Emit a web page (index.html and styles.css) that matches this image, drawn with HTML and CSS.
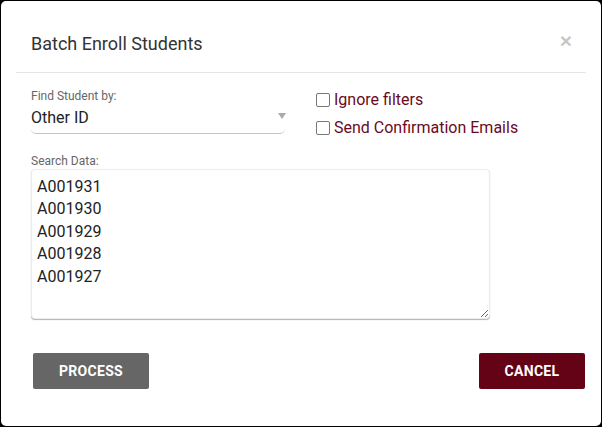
FILE: index.html
```html
<!DOCTYPE html>
<html>
<head>
<meta charset="utf-8">
<link rel="stylesheet" href="styles.css">
</head>
<body>
<div class="modal">
  <div class="modal-header">
    <h4 class="modal-title">Batch Enroll Students</h4>
    <button class="close" type="button">×</button>
  </div>
  <div class="modal-body">
    <div class="top-row">
      <div class="find-field">
        <div class="field-label">Find Student by:</div>
        <div class="select">
          <span>Other ID</span>
          <span class="arrow"></span>
        </div>
      </div>
      <div class="checks">
        <label class="check"><input type="checkbox"><span>Ignore filters</span></label>
        <label class="check"><input type="checkbox"><span>Send Confirmation Emails</span></label>
      </div>
    </div>
    <div class="field-label search-label">Search Data:</div>
    <textarea class="search-data">A001931
A001930
A001929
A001928
A001927</textarea>
  </div>
  <div class="modal-footer">
    <button class="btn btn-process" type="button">PROCESS</button>
    <button class="btn btn-cancel" type="button">CANCEL</button>
  </div>
</div>
</body>
</html>
```

FILE: styles.css
```css
* { box-sizing: border-box; }

html, body {
  margin: 0;
  padding: 0;
  background: #000;
  font-family: Roboto, "Liberation Sans", sans-serif;
}

.modal {
  margin: 1px;
  height: 425px;
  background: #fff;
  border-radius: 5px;
  display: flex;
  flex-direction: column;
}

.modal-header {
  margin: 0 15px;
  padding: 31px 15px 16px 15px;
  border-bottom: 1px solid #e5e5e5;
  display: flex;
  justify-content: space-between;
  align-items: center;
}

.modal-title {
  margin: 0;
  font-size: 18px;
  line-height: 24px;
  font-weight: 400;
  color: #333;
}

.close {
  border: 0;
  background: transparent;
  padding: 0;
  margin: -7px -1px 0 0;
  font-family: "Liberation Sans", sans-serif;
  font-size: 21px;
  font-weight: 700;
  line-height: 1;
  color: #000;
  opacity: 0.22;
}

.modal-body {
  padding: 16px 30px 0 30px;
}

.top-row {
  display: flex;
  gap: 30px;
}

.find-field {
  width: 254px;
}

.field-label {
  font-size: 12px;
  line-height: 14px;
  color: #666;
}

.select {
  display: flex;
  justify-content: space-between;
  align-items: center;
  padding: 5px 0 5px 0;
  font-size: 16px;
  line-height: 20px;
  color: #222;
  border-bottom: 1px solid #c4c4c4;
  border-radius: 0 0 5px 5px;
}

.arrow {
  width: 0;
  height: 0;
  border-left: 4px solid transparent;
  border-right: 4px solid transparent;
  border-top: 6px solid #aaa;
  margin-right: -1px;
  margin-top: -5px;
}

.checks {
  display: flex;
  flex-direction: column;
  gap: 8px;
  padding-top: 1px;
}

.check {
  display: flex;
  align-items: center;
  gap: 4px;
  font-size: 16px;
  line-height: 20px;
  color: #6a0a1d;
}

.check input {
  appearance: none;
  -webkit-appearance: none;
  margin: 0 0 0 1px;
  width: 14px;
  height: 14px;
  border: 1px solid #777;
  border-radius: 2px;
  background: #fff;
}

.search-label {
  margin-top: 16px;
  margin-bottom: 1px;
}

.search-data {
  display: block;
  width: 459px;
  height: 150px;
  margin: 0;
  padding: 6px 5px;
  border: 1px solid #ececec;
  border-radius: 4px;
  box-shadow: 0 1px 1px rgba(0, 0, 0, 0.3);
  font-family: Roboto, "Liberation Sans", sans-serif;
  font-size: 16px;
  line-height: 22.4px;
  color: #222;
  resize: both;
  outline: none;
}

.modal-footer {
  margin-top: 34px;
  padding: 0 16px 0 32px;
  display: flex;
  justify-content: space-between;
}

.btn {
  height: 36px;
  border: 0;
  border-radius: 2px;
  color: #fff;
  font-family: Roboto, "Liberation Sans", sans-serif;
  font-size: 14px;
  font-weight: 700;
  letter-spacing: 0.3px;
  text-align: center;
}

.btn-process {
  width: 116px;
  background: #666;
}

.btn-cancel {
  width: 106px;
  background: #640216;
}
```
